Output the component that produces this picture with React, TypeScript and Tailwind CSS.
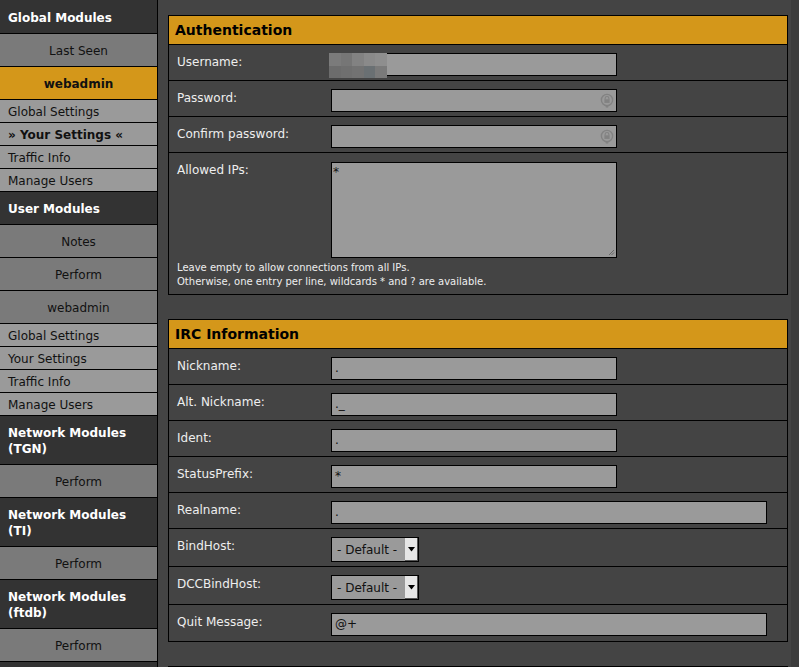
import React from "react";

const font = { fontFamily: '"DejaVu Sans", Verdana, sans-serif' };

function SideHeader({ children, first }: { children: React.ReactNode; first?: boolean }) {
  return (
    <div
      className={
        (first ? "pt-[10px] " : "pt-[9px] ") +
        "bg-[#333] border-b border-black px-2 pb-[7px] text-[12px] leading-4 font-bold text-white"
      }
    >
      {children}
    </div>
  );
}

function SideCenter({ children, active }: { children: React.ReactNode; active?: boolean }) {
  return (
    <div
      className={
        active
          ? "h-[33px] border-b border-black bg-[#d4971a] pt-[2px] text-center text-[12px] leading-[30px] font-bold text-[#111]"
          : "h-[33px] border-b border-black bg-[#7a7a7a] pt-[2px] text-center text-[12px] leading-[30px] text-[#111]"
      }
    >
      {children}
    </div>
  );
}

function SideItem({ children, bold }: { children: React.ReactNode; bold?: boolean }) {
  return (
    <div
      className={
        bold
          ? "h-[23px] border-b border-black bg-[#9a9a9a] px-2 pt-[2px] text-[12px] leading-[20px] font-bold text-[#111]"
          : "h-[23px] border-b border-black bg-[#9a9a9a] px-2 pt-[2px] text-[12px] leading-[20px] text-[#111]"
      }
    >
      {children}
    </div>
  );
}

function LockIcon() {
  return (
    <svg width="14" height="15" viewBox="0 0 14 15" className="absolute right-[2px] top-[3px]">
      <circle cx="7" cy="7" r="5.6" fill="none" stroke="#828282" strokeWidth="1.4" />
      <path d="M5.1 6.6 V5.4 a1.9 1.9 0 0 1 3.8 0 V6.6" fill="none" stroke="#828282" strokeWidth="1.1" />
      <rect x="4.4" y="6.3" width="5.2" height="3.6" fill="#828282" />
      <path d="M7 12.4 V14.8 M5.6 13.6 H8.4" stroke="#828282" strokeWidth="1.2" />
    </svg>
  );
}

function TextInput({ value, wide, password }: { value?: string; wide?: boolean; password?: boolean }) {
  return (
    <div
      className={
        (wide ? "w-[436px]" : "w-[286px]") +
        " relative h-[23px] border border-black bg-[#9a9a9a] px-[3px] text-[12px] leading-[21px] text-[#111]"
      }
    >
      {value}
      {password ? <LockIcon /> : null}
    </div>
  );
}

function Mosaic() {
  const colors = [
    "#7b7b7b", "#767676", "#828282", "#8a8a8a", "#8e8e8e",
    "#6c6c6c", "#6f6f6f", "#727272", "#6a7073", "#7a7a7a",
  ];
  return (
    <div className="relative h-[23px] w-[286px] border border-black bg-[#9a9a9a]">
      <div className="absolute left-[-3px] top-[-1px] grid h-[25px] w-[58px] grid-cols-5 grid-rows-2">
        {colors.map((c, i) => (
          <div key={i} style={{ backgroundColor: c }} />
        ))}
      </div>
    </div>
  );
}

function Select() {
  return (
    <div className="relative flex h-[25px] w-[88px] items-center border border-black bg-[#9a9a9a] text-[12px] text-[#111]">
      <span className="pl-[5px]">- Default -</span>
      <div className="absolute right-0 top-0 flex h-[23px] w-[13px] items-center justify-center border-r border-b border-[#555] bg-[#e6e6e6]">
        <svg width="7" height="5" viewBox="0 0 7 5">
          <path d="M0 0 H7 L3.5 4.5 Z" fill="#000" />
        </svg>
      </div>
    </div>
  );
}

function Row({ label, children, last, tall }: { label: string; children: React.ReactNode; last?: boolean; tall?: boolean }) {
  return (
    <div
      className={
        "flex " +
        (tall ? "h-[38px] " : "h-[36px] ") +
        (last ? "" : "border-b border-black")
      }
    >
      <div className="w-[162px] pl-[8px] pt-[9px] text-[12px] leading-4 text-[#eee]">{label}</div>
      <div className="pt-[8px]">{children}</div>
    </div>
  );
}

function Box({ title, children }: { title: string; children?: React.ReactNode }) {
  return (
    <div className="w-[620px] border border-black">
      <div className="h-[29px] border-b border-black bg-[#d4971a] pl-[6px] pt-[1px] text-[14px] font-bold leading-[27px] text-black">
        {title}
      </div>
      {children}
    </div>
  );
}

export default function App() {
  return (
    <div className="flex min-h-screen bg-[#444]" style={font}>
      <div className="flex w-[158px] shrink-0 flex-col border-r border-black bg-[#333]">
        <SideHeader first>Global Modules</SideHeader>
        <SideCenter>Last Seen</SideCenter>
        <SideCenter active>webadmin</SideCenter>
        <SideItem>Global Settings</SideItem>
        <SideItem bold>» Your Settings «</SideItem>
        <SideItem>Traffic Info</SideItem>
        <SideItem>Manage Users</SideItem>
        <SideHeader>User Modules</SideHeader>
        <SideCenter>Notes</SideCenter>
        <SideCenter>Perform</SideCenter>
        <SideCenter>webadmin</SideCenter>
        <SideItem>Global Settings</SideItem>
        <SideItem>Your Settings</SideItem>
        <SideItem>Traffic Info</SideItem>
        <SideItem>Manage Users</SideItem>
        <SideHeader>
          Network Modules
          <br />
          (TGN)
        </SideHeader>
        <SideCenter>Perform</SideCenter>
        <SideHeader>
          Network Modules
          <br />
          (TI)
        </SideHeader>
        <SideCenter>Perform</SideCenter>
        <SideHeader>
          Network Modules
          <br />
          (ftdb)
        </SideHeader>
        <SideCenter>Perform</SideCenter>
      </div>

      <div className="flex flex-1 flex-col gap-[24px] pl-[10px] pt-[15px]">
        <Box title="Authentication">
          <Row label="Username:">
            <Mosaic />
          </Row>
          <Row label="Password:">
            <TextInput password />
          </Row>
          <Row label="Confirm password:">
            <TextInput password />
          </Row>
          <div className="pb-[5px]">
            <div className="flex">
              <div className="w-[162px] pl-[8px] pt-[9px] text-[12px] leading-4 text-[#eee]">Allowed IPs:</div>
              <div className="pt-[9px]">
                <div className="relative h-[96px] w-[286px] border border-black bg-[#9a9a9a] pl-[1px] pt-[1px] text-[12px] leading-4 text-[#111]">
                  *
                  <svg width="7" height="7" viewBox="0 0 7 7" className="absolute bottom-[1px] right-[1px]">
                    <path d="M6 1 L1 6 M6 3.5 L3.5 6" stroke="#666" strokeWidth="1" />
                  </svg>
                </div>
              </div>
            </div>
            <div className="mt-[3px] pl-[8px] text-[10px] leading-[14px] text-[#eee]">
              Leave empty to allow connections from all IPs.
              <br />
              Otherwise, one entry per line, wildcards * and ? are available.
            </div>
          </div>
        </Box>

        <Box title="IRC Information">
          <Row label="Nickname:">
            <TextInput value="." />
          </Row>
          <Row label="Alt. Nickname:">
            <TextInput value="._" />
          </Row>
          <Row label="Ident:">
            <TextInput value="." />
          </Row>
          <Row label="StatusPrefix:">
            <TextInput value="*" />
          </Row>
          <Row label="Realname:">
            <TextInput value="." wide />
          </Row>
          <Row label="BindHost:" tall>
            <Select />
          </Row>
          <Row label="DCCBindHost:" tall>
            <Select />
          </Row>
          <Row label="Quit Message:" last>
            <TextInput value="@+" wide />
          </Row>
        </Box>

        <Box title="">
          <div className="h-[40px]" />
        </Box>
      </div>
      <div className="w-[8px] shrink-0 bg-[#3c3c3c]" />
    </div>
  );
}
